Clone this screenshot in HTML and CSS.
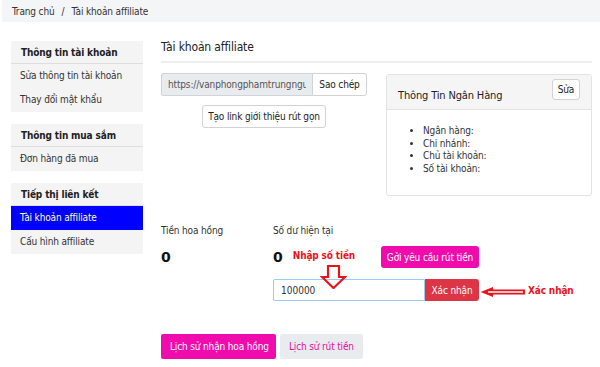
FILE: index.html
```html
<!DOCTYPE html>
<html lang="vi">
<head>
<meta charset="utf-8">
<title>Tài khoản affiliate</title>
<link rel="stylesheet" href="styles.css">
</head>
<body>
<nav class="crumb"><span>Trang chủ</span><span class="sep">/</span><span>Tài khoản affiliate</span></nav>
<div class="page">
  <aside class="side">
    <div class="group">
      <div class="ghead">Thông tin tài khoản</div>
      <a class="item">Sửa thông tin tài khoản</a>
      <a class="item">Thay đổi mật khẩu</a>
    </div>
    <div class="group">
      <div class="ghead">Thông tin mua sắm</div>
      <a class="item">Đơn hàng đã mua</a>
    </div>
    <div class="group">
      <div class="ghead">Tiếp thị liên kết</div>
      <a class="item active">Tài khoản affiliate</a>
      <a class="item">Cấu hình affiliate</a>
    </div>
  </aside>
  <main class="main">
    <h1 class="title">Tài khoản affiliate</h1>
    <div class="top">
      <div class="linkcol">
        <div class="copy">
          <input class="url" readonly value="https://vanphongphamtrungnguyen.vn/?ref=affiliate">
          <button class="btn light">Sao chép</button>
        </div>
        <button class="btn light short">Tạo link giới thiệu rút gọn</button>
      </div>
      <section class="bank">
        <div class="bhead"><span>Thông Tin Ngân Hàng</span><button class="btn light edit">Sửa</button></div>
        <ul class="blist">
          <li>Ngân hàng:</li>
          <li>Chi nhánh:</li>
          <li>Chủ tài khoản:</li>
          <li>Số tài khoản:</li>
        </ul>
      </section>
    </div>
    <div class="stats">
      <div class="stat1">
        <div class="lbl">Tiền hoa hồng</div>
        <div class="num n1">0</div>
      </div>
      <div class="stat2">
        <div class="lbl">Số dư hiện tại</div>
        <div class="balrow">
          <span class="num">0</span>
          <span class="note">Nhập số tiền</span>
          <button class="btn pink req">Gởi yêu cầu rút tiền</button>
        </div>
        <div class="wd">
          <input class="amount" value="100000">
          <button class="btn red ok">Xác nhận</button>
          <svg class="down" width="27" height="24" viewBox="0 0 27 24"><path d="M8 1 H19 V12 H25 L13.5 23 L2 12 H8 Z" fill="none" stroke="#e8141c" stroke-width="2.2" stroke-linejoin="miter"/></svg>
          <svg class="left" width="48" height="12" viewBox="0 0 48 12"><path d="M1.5 6 L14 1 V3.6 H46 V8.4 H14 V11 Z" fill="#e8141c"/><path d="M9 6 H44" stroke="#fff" stroke-width="1.3"/></svg>
          <span class="note2">Xác nhận</span>
        </div>
      </div>
    </div>
    <div class="tabs">
      <button class="tab on">Lịch sử nhận hoa hồng</button>
      <button class="tab">Lịch sử rút tiền</button>
    </div>
  </main>
</div>
</body>
</html>
```
FILE: styles.css
```css
* { box-sizing: border-box; }
body {
  margin: 0;
  background: #fff;
  font-family: "DejaVu Sans Condensed", "DejaVu Sans", sans-serif;
  font-stretch: condensed;
  font-size: 10px;
  letter-spacing: -0.15px;
  color: #212529;
}
.crumb {
  margin-left: 2px;
  height: 22px;
  background: #f4f5f7;
  padding-left: 10px;
  display: flex;
  align-items: center;
  color: #333;
}
.crumb .sep { margin: 0 7px; }
.page {
  display: flex;
  padding-left: 11px;
}
.side {
  width: 132px;
  margin-top: 19px;
  display: flex;
  flex-direction: column;
  gap: 12px;
}
.group { background: #f4f4f4; display: flex; flex-direction: column; }
.ghead {
  height: 23px;
  line-height: 23px;
  padding-left: 10px;
  font-weight: bold;
  color: #222;
  border-bottom: 1px solid #dedede;
}
.item {
  display: block;
  height: 24px;
  line-height: 24px;
  padding-left: 9px;
  color: #333;
}
.item.active { background: #0000ff; color: #ffffb8; }
.main {
  margin-left: 18px;
  width: 431px;
}
.title {
  margin: 0;
  padding-top: 16px;
  height: 41px;
  font-size: 12px;
  font-weight: normal;
  border-bottom: 2px solid #eeeeee;
  line-height: 18px;
  color: #222;
}
.top {
  display: flex;
  margin-top: 10px;
}
.linkcol { width: 225px; display: flex; flex-direction: column; }
.copy { display: flex; height: 23px; width: 206px; }
.url {
  width: 152px;
  height: 23px;
  background: #e9ecef;
  border: 1px solid #ced4da;
  border-radius: 2px 0 0 2px;
  color: #555;
  padding: 0 6px;
  font-family: inherit;
  font-size: 10px;
  letter-spacing: -0.15px;
  outline: none;
}
.btn {
  font-family: inherit;
  font-size: 10px;
  letter-spacing: -0.15px;
  border-radius: 3px;
  cursor: pointer;
  padding: 0 4px;
  white-space: nowrap;
}
.btn.light {
  background: #fff;
  border: 1px solid #d3d3d3;
  color: #222;
}
.copy .btn { width: 54px; border-radius: 0 3px 3px 0; border-left: 0; }
.short {
  margin-top: 9px;
  margin-left: 41px;
  width: 124px;
  height: 23px;
}
.bank {
  width: 206px;
  height: 122px;
  border: 1px solid #e3e3e3;
  border-radius: 3px;
  margin-top: 1px;
}
.bhead {
  height: 35px;
  background: #f5f5f5;
  border-bottom: 1px solid #e3e3e3;
  display: flex;
  align-items: center;
  justify-content: space-between;
  padding: 0 11px 0 11px;
  font-size: 11px;
  color: #222;
}
.bhead span { padding-top: 6px; }
.edit { height: 21px; width: 28px; padding: 0; margin-bottom: 6px; }
.blist {
  margin: 15px 0 0 0;
  padding-left: 36px;
  line-height: 12.5px;
  color: #333;
}
.stats {
  display: flex;
  margin-top: 28px;
}
.stat1 { width: 112px; }
.stat2 { width: 206px; position: relative; }
.lbl { height: 14px; line-height: 14px; color: #333; }
.num { font-size: 14px; font-weight: bold; color: #111; line-height: 20px; font-family: "DejaVu Sans", sans-serif; font-stretch: normal; letter-spacing: 0; }
.n1 { margin-top: 9px; }
.balrow {
  display: flex;
  align-items: center;
  margin-top: 8px;
  height: 22px;
}
.note { color: #e8141c; font-weight: bold; margin-left: 10px; margin-bottom: 3px; white-space: nowrap; }
.btn.pink {
  margin-left: auto;
  height: 22px;
  width: 98px;
  border: 0;
  background: #f00cac;
  color: #fff;
}
.wd { display: flex; margin-top: 11px; height: 22px; position: relative; }
.amount {
  width: 152px;
  height: 22px;
  border: 1px solid #9ccaf0;
  border-radius: 2px 0 0 2px;
  font-family: inherit;
  font-size: 10px;
  padding: 0 7px;
  color: #333;
  outline: none;
}
.btn.red {
  width: 54px;
  border: 0;
  background: #dc3545;
  color: #fff;
  border-radius: 0 3px 3px 0;
}
.down { position: absolute; left: 47px; top: -14px; }
.left { position: absolute; left: 206px; top: 7px; }
.note2 { position: absolute; left: 255px; top: 6px; color: #e8141c; font-weight: bold; white-space: nowrap; }
.tabs {
  display: flex;
  gap: 4px;
  margin-top: 33px;
}
.tab {
  font-family: inherit;
  font-size: 10px;
  letter-spacing: -0.15px;
  white-space: nowrap;
  height: 25px;
  border: 0;
  border-radius: 2px;
  padding: 0 9px;
  background: #e9ecef;
  color: #e60e9e;
  position: relative;
}
.tab.on { background: #f00cac; color: #fff; width: 115px; }
.tab.on::after {
  content: "";
  position: absolute;
  left: 53px;
  bottom: -4px;
  border-left: 4px solid transparent;
  border-right: 4px solid transparent;
  border-top: 4px solid #f00cac;
}
```
